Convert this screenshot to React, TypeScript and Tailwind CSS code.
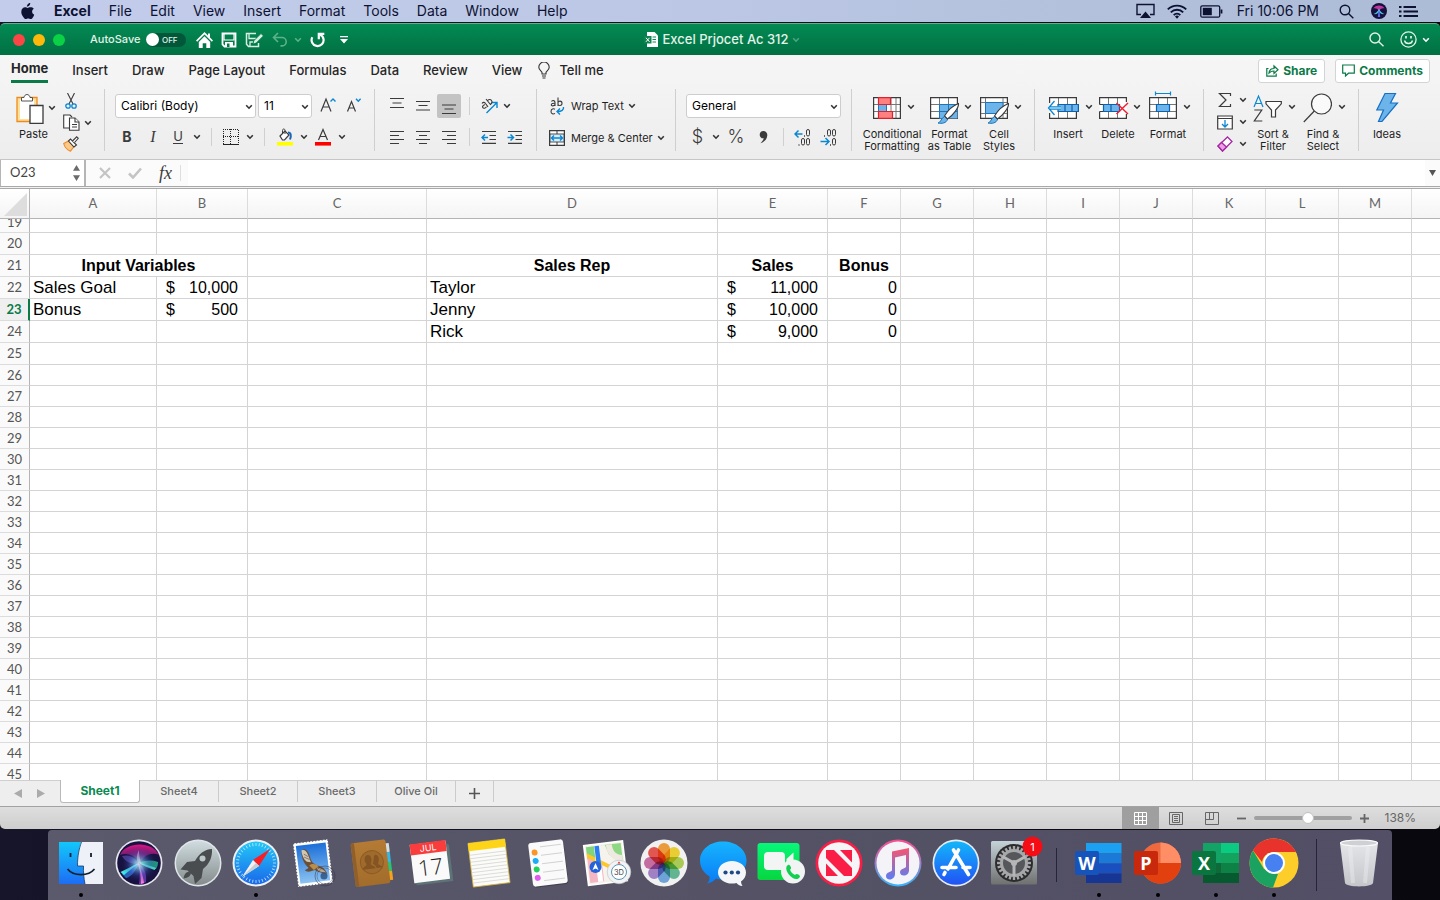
import React from "react";

const INK = "#3b3b3b";
const BLUE = "#0a87d1";

function Chevron({ color = "#333333", className = "" }: { color?: string; className?: string }) {
  return (
    <svg width="8" height="6" viewBox="0 0 8 6" className={"shrink-0 " + className} fill="none" stroke={color} strokeWidth="1.6">
      <path d="M1.2 1.2 4 4.2 6.800 1.2" />
    </svg>
  );
}

function ChevronButton({ label, className = "w-3" }: { label: string; className?: string }) {
  return (
    <button aria-label={label} className={"flex h-6 shrink-0 items-center justify-center " + className}>
      <Chevron />
    </button>
  );
}

function IconButton({ label, className = "h-6 w-[26px]", children }: { label: string; className?: string; children: React.ReactNode }) {
  return (
    <button aria-label={label} className={"flex shrink-0 items-center justify-center " + className}>
      {children}
    </button>
  );
}

function Separator({ className = "w-4" }: { className?: string }) {
  return (
    <div className={"flex h-6 shrink-0 items-center justify-center " + className}>
      <div className="h-[18px] w-px bg-[#d0d0d0]" />
    </div>
  );
}

function Select({ label, value, className }: { label: string; value: string; className: string }) {
  return (
    <div className={"relative shrink-0 " + className}>
      <select aria-label={label} className="h-6 w-full appearance-none rounded-[3px] border border-[#cdcdcd] bg-white pl-[5px] text-xs text-black">
        <option>{value}</option>
      </select>
      <Chevron className="pointer-events-none absolute top-[10px] right-[3px]" />
    </div>
  );
}

/* ---------- menu bar ---------- */

const MENUS = ["File", "Edit", "View", "Insert", "Format", "Tools", "Data", "Window", "Help"];

function MenuBar() {
  return (
    <header className="flex h-[22px] shrink-0 items-center bg-linear-to-r from-[#c3cdeb] via-[#bbc7e4] to-[#acbbd6] pr-[22px] pl-5 text-sm text-[#0d1233]">
      <svg width="15" height="17" viewBox="0 0 15 17" fill="#0d1233" className="mr-[19px] shrink-0">
        <path d="M10.2 0c.1 1-.3 1.900-.9 2.600-.6.700-1.500 1.200-2.400 1.200-.1-1 .3-1.900.9-2.600C8.400.500 9.400 0 10.200 0zM13.800 5.700c-1 .6-1.700 1.600-1.700 2.900 0 1.500.8 2.600 2.100 3.100-.3 1-.8 1.900-1.400 2.700-.6.900-1.200 1.700-2.200 1.700-.9 0-1.300-.6-2.400-.6-1.100 0-1.500.6-2.400.6-1 0-1.700-.9-2.300-1.800C2.200 12.600 1.300 10.800 1.300 8.900c0-3 1.900-4.600 3.800-4.600 1 0 1.900.7 2.500.7.600 0 1.600-.7 2.800-.7 1.300 0 2.600.5 3.400 1.400z" />
      </svg>
      <nav className="flex items-center gap-[18px] whitespace-nowrap">
        <button className="font-bold">Excel</button>
        {MENUS.map((m) => (
          <button key={m}>{m}</button>
        ))}
      </nav>
      <div className="ml-auto flex items-center">
        <svg width="19" height="16" viewBox="0 0 19 16" className="mr-3" fill="none" stroke="#0d1233" strokeWidth="1.400">
          <path d="M5 11.500H1V1.500h17v10h-4" />
          <path d="M9.500 8.500 15 15H4z" fill="#0d1233" stroke="none" />
        </svg>
        <svg width="20" height="15" viewBox="0 0 20 15" className="mr-[13px]" fill="none" stroke="#0d1233" strokeWidth="1.900">
          <path d="M.8 5.400a13 13 0 0 1 18.400 0M3.800 8.300a8.800 8.800 0 0 1 12.400 0M6.700 11.100a4.700 4.700 0 0 1 6.600 0" />
          <path d="m10 14.800-2-2.200a2.800 2.800 0 0 1 4 0z" fill="#0d1233" stroke="none" />
        </svg>
        <svg width="23" height="13" viewBox="0 0 23 13" className="mr-[14px]" fill="none" stroke="#0d1233" strokeWidth="1.300">
          <rect x=".8" y=".8" width="18.900" height="11.400" rx="1.500" />
          <rect x="2.800" y="2.800" width="9" height="7.400" fill="#0d1233" stroke="none" />
          <path d="M21.500 4.500v4" strokeWidth="1.800" />
        </svg>
        <span className="mr-5 whitespace-nowrap">Fri 10:06 PM</span>
        <svg width="15" height="15" viewBox="0 0 15 15" className="mr-[17px]" fill="none" stroke="#0d1233" strokeWidth="1.400">
          <circle cx="6" cy="6" r="4.800" />
          <path d="m9.500 9.500 4.800 4.800" />
        </svg>
        <svg width="16" height="16" viewBox="0 0 16 16" className="mr-3">
          <circle cx="8" cy="8" r="8" fill="#16103c" />
          <path d="M2.500 5.500C4 1.500 12 1.500 13.500 5.500 11 5 9 6 8 8 7 6 5 5 2.500 5.500z" fill="#c2359a" />
          <path d="M8 5.500c1 3 3 4.500 5.500 5.500-2.500.5-4.500-.5-5.500-2-1 1.500-3 2.500-5.500 2C5 10 7 8.500 8 5.500z" fill="#48c6ee" />
          <path d="M7.500 8h1l.7 6H6.800z" fill="#5d6bea" />
        </svg>
        <svg width="19" height="13" viewBox="0 0 19 13" fill="none" stroke="#0d1233" strokeWidth="2">
          <path d="M0 2h2.500M4.500 2H17M0 6.500h2.500M4.500 6.500H19M0 11h2.500M4.500 11H19" />
        </svg>
      </div>
    </header>
  );
}

/* ---------- title bar ---------- */

function TitleBar() {
  return (
    <div className="grid h-8 shrink-0 grid-cols-[1fr_auto_1fr] items-center rounded-t-[5px] border-t border-[#5fb08c] bg-linear-to-b from-[#038a53] to-[#017042] text-[#e3f3ea]">
      <div className="flex items-center pl-[13px]">
        <div className="flex gap-2">
          <button aria-label="Close" className="size-3 rounded-full bg-[#fc4646]" />
          <button aria-label="Minimize" className="size-3 rounded-full bg-[#fdb80b]" />
          <button aria-label="Zoom" className="size-3 rounded-full bg-[#0ad146]" />
        </div>
        <span className="ml-[25px] w-[56px] text-[11px] font-medium whitespace-nowrap">AutoSave</span>
        <button role="switch" aria-checked="false" aria-label="AutoSave" className="flex h-[14px] w-10 items-center rounded-full bg-[#02573a] text-[8px] font-medium">
          <span className="mr-[3px] size-[13px] rounded-full bg-white" />
          OFF
        </button>
        <button aria-label="Home" className="ml-[10px]">
          <svg width="17" height="16" viewBox="0 0 17 16" fill="#ffffff">
            <path d="M8.500 0 12 3.500V1.500h2v4l3 3-1.200 1.200L8.500 2.500 1.200 9.700 0 8.500z" />
            <path d="m8.500 4.300 5.700 5.600V16H10.300v-4.800H6.700V16H2.800V9.900z" />
          </svg>
        </button>
        <button aria-label="Save" className="ml-2">
          <svg width="16" height="16" viewBox="0 0 16 16" fill="none" stroke="#ffffff" strokeWidth="1.800">
            <path d="M1.500 1.500h13v13h-11l-2-2z" />
            <path d="M3 1.500V8h10V1.500" strokeWidth="1.200" />
            <path d="M4 10h8v5H4z" fill="#fff" stroke="none" />
            <path d="M6 11.500h2.500V15H6z" fill="#017a49" stroke="none" />
          </svg>
        </button>
        <button aria-label="Save As" className="ml-2">
          <svg width="19" height="16" viewBox="0 0 19 16" fill="none" stroke="#d6efe2" strokeWidth="1.500">
            <path d="M11 1.500H1.500v10.700l2 2.300h10V11" />
            <path d="M4 2v4.500h7M5 14v-4h3" strokeWidth="1.300" />
            <path d="m8 12 .8-3.300 7.200-7.200 2.400 2.400-7.200 7.200z" fill="#d6efe2" stroke="#017a49" strokeWidth=".8" />
          </svg>
        </button>
        <button aria-label="Undo" className="ml-2 flex items-center gap-[6px]">
          <svg width="16" height="15" viewBox="0 0 16 15" fill="none" stroke="#5cb38b" strokeWidth="1.600">
            <path d="M6 1 1.500 5.500 6 10M1.500 5.500H10a4.200 4.200 0 0 1 0 8.400H8.500" />
          </svg>
          <Chevron color="#5cb38b" />
        </button>
        <button aria-label="Redo" className="ml-2">
          <svg width="16" height="16" viewBox="0 0 16 16" fill="none" stroke="#ffffff" strokeWidth="2.200">
            <path d="M2.300 5.200A6 6 0 1 0 13.500 7c-.3-1.800-1.500-3.500-3.300-4.300" />
            <path d="M8.800 7.200V1.800h5.500" />
          </svg>
        </button>
        <button aria-label="Customize toolbar" className="ml-[14px]">
          <svg width="8" height="8" viewBox="0 0 8 8" fill="#ffffff">
            <path d="M0 0h8v1.300H0zM0 3h8L4 7.500z" />
          </svg>
        </button>
      </div>
      <div className="flex items-center text-[13px] font-medium whitespace-nowrap">
        <svg width="14" height="15" viewBox="0 0 14 15" className="mr-1 ml-1">
          <path d="M3 0h7.500L14 3.500V15H3z" fill="#fff" />
          <path d="M8.500 5H12M8.500 7.500H12M8.500 10H12" stroke="#0b8a53" />
          <path d="M0 4h7.500v7.500H0z" fill="#0d8350" />
          <path d="m2 5.800 3.500 4M5.500 5.800 2 9.800" stroke="#fff" />
        </svg>
        Excel Prjocet Ac 312
        <Chevron color="#4da680" className="ml-[3px]" />
      </div>
      <div className="flex items-center justify-end pr-[10px]">
        <button aria-label="Search" className="mr-4">
          <svg width="15" height="15" viewBox="0 0 15 15" fill="none" stroke="#e3f3ea" strokeWidth="1.400">
            <circle cx="6" cy="6" r="5" />
            <path d="m9.500 9.500 5 4.800" />
          </svg>
        </button>
        <button aria-label="Feedback" className="flex items-center gap-[5px]">
          <svg width="17" height="17" viewBox="0 0 17 17" fill="none" stroke="#e3f3ea" strokeWidth="1.300">
            <circle cx="8.500" cy="8.500" r="7.600" />
            <path d="M4.500 9.500c.8 4 7.200 4 8 0" />
            <path d="M6 5v2.500M11 5v2.500" strokeWidth="1.700" />
          </svg>
          <Chevron color="#ffffff" />
        </button>
      </div>
    </div>
  );
}

/* ---------- ribbon ---------- */

const RIBBON_TABS = ["Insert", "Draw", "Page Layout", "Formulas", "Data", "Review", "View"];

function RibbonTabs() {
  return (
    <div className="flex h-[30px] shrink-0 items-center justify-between pr-[10px] pl-[11px] text-xs font-medium text-[#262626]">
      <nav className="flex h-full items-start gap-6 text-[13px] whitespace-nowrap">
        <button className="h-7 border-b-3 border-[#0a7a48] pt-[3px] font-bold">Home</button>
        {RIBBON_TABS.map((t) => (
          <button key={t} className="h-[31px]">{t}</button>
        ))}
        <button className="-ml-2 flex h-[31px] items-center gap-[9px]">
          <svg width="12" height="17" viewBox="0 0 12 17" fill="none" stroke="#333" strokeWidth="1.100">
            <path d="M4 12V10.500C3.500 9 .8 8 .8 5.200a5.200 5.200 0 0 1 10.400 0C11.200 8 8.500 9 8 10.500V12zM4 14h4M4.500 16h3" />
          </svg>
          Tell me
        </button>
      </nav>
      <div className="flex gap-[10px] pt-px font-bold text-[#0b7a47]">
        <button className="flex h-6 items-center gap-1 rounded-[3px] border border-[#d4d4d4] bg-white px-[7px]">
          <svg width="13" height="13" viewBox="0 0 13 13" fill="none" stroke="#0b7a47" strokeWidth="1.200">
            <path d="M2.500 4.500H.8v7.700h9.400V9.500" />
            <path d="M3 9c.3-3 2-4.500 5-4.500V2l4 3.800-4 3.700V7C6 7 4.500 7.500 3 9z" />
          </svg>
          Share
        </button>
        <button className="flex h-6 items-center gap-1 rounded-[3px] border border-[#d4d4d4] bg-white px-[6px]">
          <svg width="13" height="13" viewBox="0 0 13 13" fill="none" stroke="#0b7a47" strokeWidth="1.200">
            <path d="M.7 1h11.600v8.200H6.500L3.500 12V9.200H.7z" />
          </svg>
          Comments
        </button>
      </div>
    </div>
  );
}

function Lines({ d }: { d: string }) {
  return (
    <svg width="16" height="18" viewBox="0 0 16 18" fill="none" stroke={INK} strokeWidth="1.200">
      <path d={d} />
    </svg>
  );
}

function BigButton({ label, lines, className, children }: { label: string; lines: string[]; className: string; children: React.ReactNode }) {
  return (
    <button aria-label={label} className={"flex shrink-0 flex-col items-center " + className}>
      <span className="flex h-[38px] items-center gap-[6px] pb-1 pl-[3px]">
        {children}
        <Chevron />
      </span>
      {lines.map((l) => (
        <span key={l} className="text-[11px] leading-3 whitespace-nowrap">{l}</span>
      ))}
    </button>
  );
}

function Grid28({ children }: { children?: React.ReactNode }) {
  return (
    <svg width="28" height="34" viewBox="0 0 28 34" fill="none" className="overflow-visible">
      <path d="M.6 7.600h26.800v20.800H.6z" fill="#fff" />
      <path d="M9.500 8v20M18.500 8v20M1 14.500h26M1 21.500h26" stroke="#777" />
      <path d="M.6 7.600h26.800v20.800H.6z" stroke="#3b3b3b" strokeWidth="1.200" />
      {children}
    </svg>
  );
}

function Brush() {
  return (
    <g>
      <path d="M8 33c3-.5 3-5 6.500-6.500l3 3C16.500 33 11.500 34 8 33z" fill="#6cb4ea" stroke="#1d74b8" />
      <path d="M14.500 26c3-5 8.500-10.500 14-12.500.5 4-5.500 12-11 15.500z" fill="#fff" stroke="#3b3b3b" strokeWidth="1.100" />
    </g>
  );
}

function Group({ className, children }: { className: string; children: React.ReactNode }) {
  return (
    <div className={"flex h-[62px] shrink-0 border-r border-[#cfcfcf] " + className}>{children}</div>
  );
}

function Ribbon() {
  return (
    <div className="flex h-[74px] shrink-0 overflow-hidden pt-1 text-[11px] text-[#1e1e1e]">
      <Group className="w-[105px] pl-3">
        <button className="flex w-[43px] flex-col items-center">
          <span className="flex h-[38px] items-start gap-1 pt-1 pl-1">
            <svg width="28" height="32" viewBox="0 0 28 32" fill="none">
              <path d="M1 4.500h20v24H1z" fill="#fbe29a" stroke="#f08a1d" strokeWidth="1.300" />
              <path d="M4 7h14v19H4z" fill="#fff" />
              <path d="M5.500 8V4.500H8c.5-4 5.500-4 6 0h2.500V8z" fill="#fff" stroke="#555" />
              <path d="M14 12.500h13v17.900H14z" fill="#fff" stroke="#3b3b3b" strokeWidth="1.300" />
            </svg>
            <Chevron className="mt-3" />
          </span>
          <span className="mt-px leading-3">Paste</span>
        </button>
        <div className="flex w-9 flex-col items-start pl-2">
          <IconButton label="Cut" className="h-6 w-4">
            <svg width="12" height="16" viewBox="0 0 12 16" fill="none" strokeWidth="1.100">
              <path d="M2.500 0 8 11M9.500 0 4 11" stroke="#3b3b3b" />
              <circle cx="3" cy="13" r="2.200" stroke={BLUE} strokeWidth="1.300" />
              <circle cx="9" cy="13" r="2.200" stroke={BLUE} strokeWidth="1.300" />
            </svg>
          </IconButton>
          <button aria-label="Copy" className="flex h-[19px] shrink-0 items-center gap-1">
            <svg width="17" height="17" viewBox="0 0 17 17" fill="#fff" stroke="#3b3b3b" strokeWidth="1.100">
              <path d="M7 14H.7V1H7l2 2" />
              <path d="M6.500 4H12l4 4v8.300H6.500z" />
              <path d="M12 4v4h4M9 10.500h5M9 13h5" />
            </svg>
            <Chevron />
          </button>
          <IconButton label="Format Painter" className="h-6 w-4">
            <svg width="16" height="16" viewBox="0 0 16 16" strokeWidth="1.100">
              <path d="M.7 7.500 5.500 5 11 10.500 7.500 15.200C4.500 14 1.500 11 .7 7.500z" fill="#fbc98b" stroke="#f08a1d" />
              <path d="m5.500 5 2-2 6 6-2.500 2z" fill="#fff" stroke="#3b3b3b" />
              <path d="m9.500 5 4.200-4.200L15.300 2.300 11.500 6.500" fill="#fff" stroke="#3b3b3b" />
            </svg>
          </IconButton>
        </div>
      </Group>

      <Group className="w-[270px] flex-col gap-[7px] pt-[5px] pl-[9px]">
        <div className="flex items-center gap-[2px] pl-px">
          <Select label="Font" value="Calibri (Body)" className="w-[141px]" />
          <Select label="Font size" value="11" className="w-[54px]" />
          <IconButton label="Increase font size" className="ml-[2px] h-6 w-6">
            <svg width="17" height="18" viewBox="0 0 17 18" fill="none" stroke={INK} strokeWidth="1.200">
              <path d="M1 14.500 6 2l5 12.500M2.800 10h6.400" />
              <path d="m10.500 4.500 2.500-2.500 2.500 2.500" stroke={BLUE} strokeWidth="1.400" />
            </svg>
          </IconButton>
          <IconButton label="Decrease font size" className="h-6 w-6">
            <svg width="16" height="18" viewBox="0 0 16 18" fill="none" stroke={INK} strokeWidth="1.200">
              <path d="M1.500 14.500 5.500 4.500l4 10M3 11h5" />
              <path d="m10 1.800 2.300 2.400L14.600 1.800" stroke={BLUE} strokeWidth="1.400" />
            </svg>
          </IconButton>
        </div>
        <div className="flex items-center">
          <IconButton label="Bold"><span className="text-sm font-bold text-[#3b3b3b]">B</span></IconButton>
          <IconButton label="Italic"><span className="font-['Liberation_Serif',serif] text-base text-[#3b3b3b] italic">I</span></IconButton>
          <IconButton label="Underline" className="h-6 w-6"><span className="border-b border-[#3b3b3b] text-[13px] leading-[13px] text-[#3b3b3b]">U</span></IconButton>
          <ChevronButton label="Underline options" className="w-[14px]" />
          <Separator className="w-[14px]" />
          <IconButton label="Borders">
            <svg width="16" height="16" viewBox="0 0 16 16" fill="none" stroke="#222" strokeWidth="1" shapeRendering="crispEdges">
              <path d="M0 .5h16M0 7.500h16M.5 0v15M15.500 1v14M7.500 0v15" strokeDasharray="1 1" />
              <path d="M0 15.500h16" />
            </svg>
          </IconButton>
          <ChevronButton label="Border options" />
          <Separator />
          <IconButton label="Fill color">
            <svg width="16" height="18" viewBox="0 0 16 18" fill="none">
              <path d="m3 8 5-5 4 4-4.500 5H5.500z" fill="#fff" stroke="#3b3b3b" strokeWidth="1.200" />
              <path d="M5.500 5.500V2.500c0-2 2.500-2 2.500 0V6" stroke="#3b3b3b" />
              <path d="M11 4.500c3 0 3.500 3 2 7" stroke="#1d66b5" strokeWidth="2" />
              <path d="M0 14h16v3.600H0z" fill="#ffff00" />
            </svg>
          </IconButton>
          <ChevronButton label="Fill color options" />
          <IconButton label="Font color">
            <svg width="16" height="18" viewBox="0 0 16 18" fill="none">
              <path d="M3.500 12 8 1.500 12.500 12M5 8.500h6" stroke={INK} strokeWidth="1.200" />
              <path d="M0 14h16v3.600H0z" fill="#ff0000" />
            </svg>
          </IconButton>
          <ChevronButton label="Font color options" />
        </div>
      </Group>

      <Group className="w-[162px] flex-col gap-[7px] pt-[5px] pl-[9px]">
        <div className="flex items-center">
          <IconButton label="Top align"><Lines d="M1 1.500h14M3.500 6h9M1 10.500h14" /></IconButton>
          <IconButton label="Middle align"><Lines d="M1 4.500h14M3.500 8.500h9M1 13h14" /></IconButton>
          <IconButton label="Bottom align" className="mx-px h-6 w-6 rounded-[2px] bg-[#c3c3c3]"><Lines d="M1 8h14M3.500 12h9M1 16.500h14" /></IconButton>
          <Separator className="w-[14px]" />
          <IconButton label="Orientation">
            <svg width="17" height="16" viewBox="0 0 17 16" fill="none" strokeWidth="1.100">
              <path d="M5.500 15 15.500 5M10.500 4.500h5.500V10" stroke={BLUE} strokeWidth="1.400" />
              <path d="M1 5.500C2 4 3.500 4 4.500 5.500L7 8.800M3.800 6.500c-2 1.200-2.800 2.200-2 3.200s2.800.6 3.700-1M5 1l4.800 6M6.500 3c.8-1.700 3-2 4-.5s.5 3-1.500 4" stroke={INK} />
            </svg>
          </IconButton>
          <ChevronButton label="Orientation options" className="w-[10px]" />
        </div>
        <div className="flex items-center">
          <IconButton label="Align left"><Lines d="M1 3.500h14M1 7.500h9M1 11.500h14M1 15.500h9" /></IconButton>
          <IconButton label="Align center"><Lines d="M1 3.500h14M4 7.500h8M1 11.500h14M4 15.500h8" /></IconButton>
          <IconButton label="Align right"><Lines d="M1 3.500h14M6 7.500h9M1 11.500h14M6 15.500h9" /></IconButton>
          <Separator className="w-[14px]" />
          <IconButton label="Decrease indent">
            <svg width="16" height="14" viewBox="0 0 16 14" fill="none" stroke={INK} strokeWidth="1.200">
              <path d="M1 1.500h14M8.500 5.500H15M8.500 9.500H15M1 13.400h14" />
              <path d="M7 7.500H1.500M4 4.500l-3 3 3 3" stroke={BLUE} strokeWidth="1.500" />
            </svg>
          </IconButton>
          <IconButton label="Increase indent">
            <svg width="16" height="14" viewBox="0 0 16 14" fill="none" stroke={INK} strokeWidth="1.200">
              <path d="M1 1.500h14M8.500 5.500H15M8.500 9.500H15M1 13.400h14" />
              <path d="M.5 7.500H6M3.500 4.500l3 3-3 3" stroke={BLUE} strokeWidth="1.500" />
            </svg>
          </IconButton>
        </div>
      </Group>

      <Group className="w-[139px] flex-col gap-2 pt-[5px] pl-3">
        <button className="flex h-6 items-center whitespace-nowrap">
          <svg width="16" height="18" viewBox="0 0 16 18" fill="none" stroke={INK} strokeWidth="1.100" className="mr-[6px]">
            <path d="M2.500 4.500C3.500 3 6 3.300 6 5.500V9M6 6.300C4 6.200 2.300 6.600 2.300 7.900S5 9.300 6 7.500M9 .5V9M9 6c0-2.500 4-2.700 4 .3S9 9 9 7M6 12.200c-1.500-1-4-.5-4 2.200s2.500 3 4 2" />
            <path d="M14.500 10c.5 3-2 4.500-6 4.500M11 11.500l-3 3 3 3" stroke={BLUE} strokeWidth="1.400" />
          </svg>
          Wrap Text
          <Chevron className="ml-1" />
        </button>
        <button className="flex h-6 items-center whitespace-nowrap">
          <svg width="16" height="16" viewBox="0 0 16 16" fill="none" className="mr-[6px]">
            <path d="M.6.600h14.800v14.800H.6z" fill="#fff" stroke={INK} strokeWidth="1.200" />
            <path d="M8 1v14" stroke={INK} />
            <path d="M1 4h14v8H1z" fill="#d5ecfa" stroke={INK} strokeWidth=".9" />
            <path d="M2.500 8h11M5 5.500 2.500 8 5 10.500M11 5.500 13.500 8 11 10.500" stroke={BLUE} strokeWidth="1.400" />
          </svg>
          Merge &amp; Center
          <Chevron className="ml-1" />
        </button>
      </Group>

      <Group className="w-[176px] flex-col gap-[7px] pt-[5px] pl-[10px]">
        <Select label="Number format" value="General" className="w-[155px]" />
        <div className="flex items-center text-[#3b3b3b]">
          <IconButton label="Accounting format" className="h-6 w-[23px]"><span className="text-lg leading-5 font-light">$</span></IconButton>
          <ChevronButton label="Accounting options" className="w-[14px]" />
          <IconButton label="Percent"><span className="text-lg leading-5 font-light">%</span></IconButton>
          <IconButton label="Comma" className="h-6 w-7">
            <svg width="9" height="14" viewBox="0 0 9 14" fill={INK}><path d="M4.300 1C7 1 8.500 3 8.300 5.500 8 9 5.500 12 1.500 13.300c2-2 3-3.500 3.300-5C2.500 8.700.7 7 .7 4.700.7 2.500 2.200 1 4.300 1z" /></svg>
          </IconButton>
          <Separator className="w-3" />
          <IconButton label="Increase decimal">
            <svg width="17" height="17" viewBox="0 0 17 17" fill="none" stroke={INK}>
              <path d="M8.500 5H1M4.500 1.500 1 5l3.500 3.500" stroke={BLUE} strokeWidth="1.500" />
              <rect x="12.500" y=".5" width="3" height="6.500" rx="1.500" /><rect x="7.500" y="9.500" width="3" height="6.500" rx="1.500" /><rect x="12.500" y="9.500" width="3" height="6.500" rx="1.500" />
              <path d="M10 7h1M4.500 16h1" strokeWidth="1.300" />
            </svg>
          </IconButton>
          <IconButton label="Decrease decimal">
            <svg width="17" height="17" viewBox="0 0 17 17" fill="none" stroke={INK}>
              <path d="M.5 12.500h8M5.500 9 9 12.500 5.500 16" stroke={BLUE} strokeWidth="1.500" />
              <rect x="7.500" y=".5" width="3" height="6.500" rx="1.500" /><rect x="12.500" y=".5" width="3" height="6.500" rx="1.500" /><rect x="12.500" y="9.500" width="3" height="6.500" rx="1.500" />
              <path d="M4 7h1M10 16h1" strokeWidth="1.300" />
            </svg>
          </IconButton>
        </div>
      </Group>

      <Group className="w-[183px] pt-px pl-[10px]">
        <BigButton label="Conditional Formatting" lines={["Conditional", "Formatting"]} className="w-[60px]">
          <svg width="28" height="34" viewBox="0 0 28 34" fill="none">
            <path d="M.6 7.600h26.800v20.800H.6z" fill="#fff" />
            <path d="M5.500 8v20M18 8v20M23 8v20M1 14.500h26M1 21.500h26" stroke="#777" />
            <path d="M.6 7.600h26.800v20.800H.6z" stroke={INK} strokeWidth="1.200" />
            <path d="M5.500 14.500h8v7h-8z" fill="#6cb4ea" stroke="#1d74b8" />
            <path d="M5.500 7.600h12v6.900h-12zM5.500 21.500h14v6.900h-14z" fill="#ff8080" stroke="#e0202c" strokeWidth="1.200" />
          </svg>
        </BigButton>
        <BigButton label="Format as Table" lines={["Format", "as Table"]} className="w-[55px]">
          <Grid28>
            <path d="M9.500 14.500h18v14h-18z" fill="#6cb4ea" />
            <path d="M9.500 28.500v-14h18M18.500 14.500v14M9.500 21.500h18" stroke="#1d74b8" />
            <Brush />
          </Grid28>
        </BigButton>
        <BigButton label="Cell Styles" lines={["Cell", "Styles"]} className="w-11">
          <svg width="28" height="34" viewBox="0 0 28 34" fill="none" className="overflow-visible">
            <path d="M.6 7.600h26.800v20.800H.6z" fill="#fff" stroke={INK} strokeWidth="1.200" />
            <path d="M5.500 8v20M23 8v20M1 12.500h26M1 23.500h26" stroke="#777" />
            <path d="M5.500 12.500H23v11H5.500z" fill="#6cb4ea" stroke="#1d74b8" />
            <Brush />
          </svg>
        </BigButton>
      </Group>

      <Group className="w-[169px] pt-px pl-2">
        <BigButton label="Insert Cells" lines={["Insert"]} className="w-[50px]">
          <svg width="32" height="34" viewBox="0 0 32 34" fill="none">
            <path d="M2.600 7.600h26.800v20.800H2.600z" fill="#fff" />
            <path d="M11.500 8v20M20.500 8v20" stroke="#777" />
            <path d="M2.600 13V7.600h26.800V14.500M2.600 23v5.400h26.800V22" stroke={INK} strokeWidth="1.200" />
            <path d="M11 14.500h20.400v7H11zM18 14.500v7M25 14.500v7" fill="#6cb4ea" stroke="#0d62ad" strokeWidth="1.200" />
            <path d="M8 11.500 1.500 18 8 24.500V19.500h6v-3H8z" fill="#fff" />
            <path d="M7.500 11 1.500 18l6 7M2.500 16.800H14M2.500 19.200H14" stroke={BLUE} strokeWidth="1.300" />
          </svg>
        </BigButton>
        <BigButton label="Delete Cells" lines={["Delete"]} className="w-[50px]">
          <svg width="28" height="34" viewBox="0 0 28 34" fill="none" className="overflow-visible">
            <path d="M.6 7.600h26.800v20.800H.6z" fill="#fff" />
            <path d="M9.500 8v6M18.500 8v6M9.500 22v6M18.500 22v6" stroke="#777" />
            <path d="M.6 14.500V7.600h26.800V12M.6 14.500h5M.6 21.500h5M.6 21.500v6.900h26.800V24" stroke={INK} strokeWidth="1.200" />
            <path d="M4.500 14.500h16v7h-16zM12 14.500v7" fill="#6cb4ea" stroke="#0d62ad" strokeWidth="1.200" />
            <path d="m17.500 13 11.500 11M29 13 17.500 24" stroke="#f0212f" strokeWidth="1.500" />
          </svg>
        </BigButton>
        <BigButton label="Format Cells" lines={["Format"]} className="w-[50px]">
          <Grid28>
            <path d="M7.500 14.500h13v7h-13z" fill="#6cb4ea" stroke="#0d62ad" strokeWidth="1.200" />
            <path d="M6 3.500h16M6.500 1.500v4M21.500 1.500v4" stroke={BLUE} strokeWidth="1.200" />
          </Grid28>
        </BigButton>
      </Group>

      <Group className="w-[155px] pt-px pl-[13px]">
        <div className="-mt-px flex w-[31px] flex-col">
          <button aria-label="AutoSum" className="flex h-[22px] shrink-0 items-center gap-[6px]">
            <svg width="16" height="16" viewBox="0 0 16 16" fill="none" stroke={INK} strokeWidth="1.200">
              <path d="M13.500 4V1.500h-11L9 8l-6.500 6.500h11V12" />
            </svg>
            <Chevron />
          </button>
          <button aria-label="Fill" className="flex h-[22px] shrink-0 items-center gap-[6px]">
            <svg width="16" height="15" viewBox="0 0 16 15" fill="none" stroke={INK} strokeWidth="1.200">
              <path d="M.7 1h14.600v13H.7zM.7 3.500h14.600" fill="#fff" />
              <path d="M8 5v7M5 9l3 3 3-3" stroke={BLUE} strokeWidth="1.300" />
            </svg>
            <Chevron />
          </button>
          <button aria-label="Clear" className="flex h-[22px] shrink-0 items-center gap-[6px]">
            <svg width="16" height="16" viewBox="0 0 16 16" fill="#fff" stroke="#a626a4" strokeWidth="1.300">
              <path d="M10.500 1 15 5.500 5.500 15 1 10z" />
              <path d="m4.500 6.500 5 4.500-4 4L1 10z" fill="#eba0e6" />
            </svg>
            <Chevron />
          </button>
        </div>
        <BigButton label="Sort & Filter" lines={["Sort &", "Filter"]} className="w-[50px]">
          <svg width="29" height="34" viewBox="0 0 29 34" fill="none" strokeWidth="1.200">
            <path d="M1 17 5.500 6 10 17M2.700 13.500h5.600" stroke={BLUE} />
            <path d="M1.300 20h7.500L1.300 31h8" stroke={INK} />
            <path d="M13 11.500h15.300v2.300L22.500 20v7h-4v-7L13 13.800z" fill="#fff" stroke={INK} />
          </svg>
        </BigButton>
        <BigButton label="Find & Select" lines={["Find &", "Select"]} className="w-[50px]">
          <svg width="29" height="34" viewBox="0 0 29 34" fill="none" stroke={INK} strokeWidth="1.200">
            <circle cx="18.500" cy="14" r="10" fill="#fafafa" />
            <path d="M11.300 21 .8 32" />
          </svg>
        </BigButton>
      </Group>

      <button className="ml-[3px] flex w-[50px] shrink-0 flex-col items-center pt-px">
        <svg width="24" height="34" viewBox="0 0 24 34" className="mb-1" fill="#6cb4ea" stroke="#1470c4" strokeWidth="1.200">
          <path d="M10 3.500h10.500L15.500 13H22.500L7 31.500H3.500L8.500 20H1.800z" />
        </svg>
        <span className="leading-3">Ideas</span>
      </button>
    </div>
  );
}

function FormulaBar() {
  return (
    <div className="flex h-7 shrink-0 border-y border-t-[#c6c6c6] border-b-[#a9a9a9] bg-[#fbfbfb]">
      <div className="flex w-[86px] items-center border-r-2 border-l border-[#b5b5b5] bg-white">
        <input aria-label="Name box" defaultValue="O23" className="w-[67px] pl-[9px] font-[Lato,sans-serif] text-[13px] text-[#444]" />
        <svg width="9" height="18" viewBox="0 0 9 18" className="ml-1" fill="#6b6b6b">
          <path d="M4.500 1 8 6.800H1zM4.500 17 8 11.200H1z" />
        </svg>
      </div>
      <div className="flex items-center pl-[13px]">
        <button aria-label="Cancel" className="mr-[17px]">
          <svg width="12" height="12" viewBox="0 0 12 12" stroke="#c4c4c4" strokeWidth="2.200"><path d="m1 1 10 10M11 1 1 11" /></svg>
        </button>
        <button aria-label="Enter" className="mr-[17px]">
          <svg width="14" height="12" viewBox="0 0 14 12" fill="none" stroke="#c4c4c4" strokeWidth="2.600"><path d="m1 6.500 4 4L13 1.500" /></svg>
        </button>
        <button aria-label="Insert function" className="mr-2 font-['Liberation_Serif',serif] text-lg leading-5 text-[#3b3b3b] italic">fx</button>
        <div className="h-4 w-px bg-[#dedede]" />
      </div>
      <input aria-label="Formula" className="ml-[7px] min-w-0 flex-1 bg-white" />
      <button aria-label="Expand formula bar" className="px-1">
        <svg width="7" height="6" viewBox="0 0 7 6" fill="#555"><path d="M0 0h7L3.500 6z" /></svg>
      </button>
    </div>
  );
}

/* ---------- sheet ---------- */

const COLS = ["A", "B", "C", "D", "E", "F", "G", "H", "I", "J", "K", "L", "M", ""];
const ROWS = Array.from({ length: 27 }, (_, i) => i + 19);

type Cell = { text: string; kind: "head" | "text" | "money" | "number"; span?: number };
const CELLS: Record<string, Cell> = {
  A21: { text: "Input Variables", kind: "head", span: 2 },
  D21: { text: "Sales Rep", kind: "head" },
  E21: { text: "Sales", kind: "head" },
  F21: { text: "Bonus", kind: "head" },
  A22: { text: "Sales Goal", kind: "text" },
  B22: { text: "10,000", kind: "money" },
  D22: { text: "Taylor", kind: "text" },
  E22: { text: "11,000", kind: "money" },
  F22: { text: "0", kind: "number" },
  A23: { text: "Bonus", kind: "text" },
  B23: { text: "500", kind: "money" },
  D23: { text: "Jenny", kind: "text" },
  E23: { text: "10,000", kind: "money" },
  F23: { text: "0", kind: "number" },
  D24: { text: "Rick", kind: "text" },
  E24: { text: "9,000", kind: "money" },
  F24: { text: "0", kind: "number" },
};

const CELL_STYLE = {
  head: "text-center font-bold",
  text: "pl-[3px] text-left text-[17px]",
  money: "px-[9px]",
  number: "pr-[3px] text-right",
};

function rowHeight(n: number) {
  if (n === 19) return "h-[14px]";
  return n <= 25 ? "h-[22px] leading-[21px]" : "h-[21px] leading-5";
}

function Sheet() {
  return (
    <main className="min-h-0 flex-1 overflow-hidden border-t border-[#a9a9a9] bg-white">
      <table className="w-full table-fixed border-separate border-spacing-0 whitespace-nowrap">
        <colgroup>
          <col className="w-[30px]" />
          <col className="w-[127px]" />
          <col className="w-[91px]" />
          <col className="w-[179px]" />
          <col className="w-[291px]" />
          <col className="w-[110px]" />
          {COLS.slice(5, 13).map((c) => (
            <col key={c} className="w-[73px]" />
          ))}
          <col />
        </colgroup>
        <thead>
          <tr className="h-[30px] bg-linear-to-b from-white to-[#f4f4f4] font-[Lato,sans-serif] text-[13px] text-[#666]">
            <th className="border-r border-b border-[#b4b4b4] p-0">
              <svg width="29" height="29" viewBox="0 0 29 29" className="block"><path d="M27 4v23H4z" fill="#dddddd" /></svg>
            </th>
            {COLS.map((c) => (
              <th key={c} scope="col" className="border-r border-b border-r-[#dcdcdc] border-b-[#b4b4b4] p-0 font-normal last:border-r-0">{c}</th>
            ))}
          </tr>
        </thead>
        <tbody className="font-['Liberation_Sans',sans-serif] text-base text-black">
          {ROWS.map((n) => (
            <tr key={n} className={rowHeight(n)}>
              <th
                scope="row"
                className={
                  "border-b border-b-[#dcdcdc] p-0 font-[Lato,sans-serif] text-[13px] " +
                  (n === 23
                    ? "border-r-2 border-r-[#0a7a48] bg-[#efefef] font-bold text-[#0a7a48]"
                    : "border-r border-r-[#b4b4b4] bg-[#fafafa] font-normal text-[#555]")
                }
              >
                {n === 19 ? (
                  <span className="flex h-[13px] items-end justify-center overflow-hidden"><span className="leading-5">19</span></span>
                ) : (
                  n
                )}
              </th>
              {COLS.map((c, i) => {
                if (n === 21 && c === "B") return null;
                const cell = CELLS[c + n];
                return (
                  <td key={i} colSpan={cell?.span} className={"border-r border-b border-[#d4d4d4] py-0 last:border-r-0 " + (cell ? CELL_STYLE[cell.kind] : "")}>
                    {cell?.kind === "money" ? (
                      <span className="flex justify-between"><span>$</span><span>{cell.text}</span></span>
                    ) : (
                      cell?.text
                    )}
                  </td>
                );
              })}
            </tr>
          ))}
        </tbody>
      </table>
    </main>
  );
}

function SheetTabs() {
  return (
    <div className="flex h-[26px] shrink-0 items-start border-t border-[#cfcfcf] bg-[#eeeeee] text-[11px] font-medium text-[#6a6a6a]">
      <div className="flex w-[60px] items-center gap-[15px] pt-2 pl-[14px]">
        <button aria-label="Previous sheet"><svg width="8" height="9" viewBox="0 0 8 9" className="block" fill="#ababab"><path d="M8 0v9L0 4.500z" /></svg></button>
        <button aria-label="Next sheet"><svg width="8" height="9" viewBox="0 0 8 9" className="block" fill="#ababab"><path d="M0 0v9l8-4.500z" /></svg></button>
      </div>
      <button className="-mt-px h-[23px] w-20 rounded-b-[3px] border border-t-0 border-[#b9b9b9] bg-white text-xs font-bold text-[#0b8a50]">Sheet1</button>
      {["Sheet4", "Sheet2", "Sheet3", "Olive Oil"].map((s) => (
        <button key={s} className="h-[21px] w-[79px] border-r border-[#cbcbcb]">{s}</button>
      ))}
      <button aria-label="Add sheet" className="flex h-[21px] w-[38px] items-center justify-center border-r border-[#cbcbcb] pt-1">
        <svg width="11" height="11" viewBox="0 0 11 11" stroke="#555" strokeWidth="1.600"><path d="M5.500 0v11M0 5.500h11" /></svg>
      </button>
    </div>
  );
}

function StatusBar() {
  return (
    <div className="flex h-[23px] shrink-0 items-center justify-end rounded-b-[5px] border-t border-[#a2a2a2] bg-linear-to-b from-[#dedede] to-[#cecece] text-[#666]">
      <button aria-label="Normal view" className="flex h-full w-[37px] items-center justify-center bg-[#9f9f9f]">
        <svg width="13" height="13" viewBox="0 0 13 13" fill="none" stroke="#fff"><path d="M.5.500h12v12H.5zM4.500.500v12M8.500.500v12M.5 4.500h12M.5 8.500h12" /></svg>
      </button>
      <button aria-label="Page layout view" className="ml-[10px]">
        <svg width="14" height="13" viewBox="0 0 14 13" fill="none" stroke="#666"><path d="M.5.500h13v12H.5zM3.500 2.500h7v8h-7zM5 4.500h4M5 6.500h4M5 8.500h4" /></svg>
      </button>
      <button aria-label="Page break view" className="mx-[22px]">
        <svg width="14" height="13" viewBox="0 0 14 13" fill="none" stroke="#666"><path d="M.5.500h13v12H.5zM.5 7.500h8v-7M4.500.500v7" /></svg>
      </button>
      <button aria-label="Zoom out" className="-ml-1">
        <svg width="9" height="9" viewBox="0 0 9 9" stroke="#666" strokeWidth="1.800"><path d="M0 4.500h9" /></svg>
      </button>
      <input
        type="range"
        aria-label="Zoom level"
        min={0}
        max={100}
        defaultValue={56}
        className="mx-2 h-1 w-[98px] appearance-none rounded-full bg-[#a0a0a0] [&::-webkit-slider-thumb]:size-3 [&::-webkit-slider-thumb]:appearance-none [&::-webkit-slider-thumb]:rounded-full [&::-webkit-slider-thumb]:border [&::-webkit-slider-thumb]:border-[#c0c0c0] [&::-webkit-slider-thumb]:bg-white"
      />
      <button aria-label="Zoom in">
        <svg width="9" height="9" viewBox="0 0 9 9" stroke="#666" strokeWidth="1.800"><path d="M0 4.500h9M4.500 0v9" /></svg>
      </button>
      <span className="mr-6 ml-4 text-xs">138%</span>
    </div>
  );
}

/* ---------- dock ---------- */

function Defs() {
  const stops: [string, string, string][] = [
    ["finder", "#12c7fb", "#1d6df5"],
    ["silver", "#cfdcdf", "#858b8c"],
    ["safari", "#23c8f7", "#1a67ea"],
    ["sky", "#1c6fd8", "#8cc3f2"],
    ["msg", "#16b4ff", "#0a7cf5"],
    ["green", "#06f77a", "#07d640"],
    ["store", "#12b6fb", "#2252f4"],
    ["note", "#f9556f", "#5a7df5"],
    ["ring", "#fb4b8b", "#35b5fb"],
    ["pref", "#c5d3d8", "#6f706f"],
    ["trash", "#e6e7ea", "#c5c6ca"],
    ["book", "#b57b35", "#a26c2b"],
  ];
  return (
    <svg width="0" height="0" className="absolute">
      <defs>
        {stops.map(([id, a, b]) => (
          <linearGradient key={id} id={id} x1="0" y1="0" x2="0" y2="1">
            <stop offset="0" stopColor={a} />
            <stop offset="1" stopColor={b} />
          </linearGradient>
        ))}
        <radialGradient id="siriGlow" cx=".5" cy=".52" r=".5">
          <stop offset="0" stopColor="#ffffff" />
          <stop offset=".22" stopColor="#8fd9f5" stopOpacity=".9" />
          <stop offset=".6" stopColor="#3b4fb8" stopOpacity=".45" />
          <stop offset="1" stopColor="#140f35" stopOpacity="0" />
        </radialGradient>
        <linearGradient id="siriTop" x1="0" y1="0" x2="0" y2="1">
          <stop offset="0" stopColor="#e01283" />
          <stop offset="1" stopColor="#a3309d" stopOpacity=".3" />
        </linearGradient>
      </defs>
    </svg>
  );
}

function OfficeTile({ letter, color }: { letter: string; color: string }) {
  return (
    <g>
      <rect x="1" y="13" width="24" height="24" rx="2" fill={color} />
      <text x="13" y="31.500" textAnchor="middle" fontSize="18" fontWeight="700" fill="#fff" fontFamily="Open Sans, sans-serif">{letter}</text>
    </g>
  );
}

const PETALS = ["#f7941d", "#f5d313", "#a6cf3b", "#4fb58a", "#5b9fe0", "#9a74c8", "#c85a9c", "#ee3e36"];
const TEETH = Array.from({ length: 24 }, (_, i) => i * 15);
const TICKS = Array.from({ length: 36 }, (_, i) => i * 10);

const APPS: { name: string; running?: boolean; art: React.ReactNode }[] = [
  {
    name: "Finder",
    running: true,
    art: (
      <g>
        <path d="M3 4h44v42H3z" fill="#eef2f8" />
        <path d="M3 4h22c-2 7-3.500 14-3.500 24h6c-.2 6 .3 12 1.500 18H3z" fill="url(#finder)" />
        <path d="M25.500 4c-2.500 7-4 14-4 24h6c-.2 6 .3 12 1.500 18" fill="none" stroke="#173a66" strokeWidth=".8" />
        <path d="M14.500 15v4M35 15v4" stroke="#12202e" strokeWidth="1.800" />
        <path d="M11.500 31c6 7.500 21 7.500 27 0" fill="none" stroke="#12202e" strokeWidth="1.700" />
      </g>
    ),
  },
  {
    name: "Siri",
    art: (
      <g>
        <circle cx="25" cy="25" r="23.500" fill="#e6e6ee" />
        <circle cx="25" cy="25" r="21.800" fill="#17123f" />
        <path d="M6 17C11 4 38 2 45 17c-7-3-15 0-19 8-4-6-11-11-20-8z" fill="url(#siriTop)" />
        <path d="M8 18c8-2 14 2 17 8-8 0-14-2-17-8z" fill="#6f58c8" opacity=".6" />
        <path d="M8 36c5-5 10-9 17-11-3 8-8 14-13 15z" fill="#2b77dc" opacity=".85" />
        <path d="M6.500 34 25 25 10 37z" fill="#42f5ec" />
        <path d="M25 25c7-3 13-3 19-1 0 3-1 5-2 7-6-1-11-3-17-6z" fill="#23b893" opacity=".85" />
        <path d="M25 25c6 1 12 3 17 5l-1.500 2C35 30 30 28 25 25z" fill="#4ef0cf" />
        <path d="M24 25c6 4 9 10 8 19-3 2-5 2-7 2 1-7 1-14-1-21z" fill="#7d40c4" opacity=".8" />
        <path d="M24 25c3 6 5 13 6 20l-3 1c0-8-1-14-3-21z" fill="#f47ad9" />
        <circle cx="25" cy="25.500" r="19" fill="url(#siriGlow)" opacity=".75" />
        <path d="M25 12c0 6 1 9 2 13h-3c-2-5-1-9 1-13z" fill="#fff" opacity=".35" />
      </g>
    ),
  },
  {
    name: "Launchpad",
    art: (
      <g>
        <circle cx="25" cy="25" r="23.500" fill="#dfe6e8" />
        <circle cx="25" cy="25" r="22" fill="url(#silver)" />
        <path d="M39 11c.5 8-2.500 15-9 20l-1.500 9-6.500 6-1.500-8-6-5.500-7-1 6.500-7.500 8-1c4-7 9-11.500 17-12z" fill="#4a4d4f" />
        <circle cx="29.500" cy="20.500" r="3" fill="#bcc7ca" />
        <path d="M16 33.500c-4 1-5 4-5.500 7 3-.5 6-1 7.500-5z" fill="#4a4d4f" />
      </g>
    ),
  },
  {
    name: "Safari",
    running: true,
    art: (
      <g>
        <circle cx="25" cy="25" r="23.500" fill="#eef1f4" />
        <circle cx="25" cy="25" r="21.500" fill="url(#safari)" />
        {TICKS.map((a) => (
          <path key={a} d="M25 5v3" stroke="#c6e8fb" strokeWidth=".8" transform={`rotate(${a} 25 25)`} />
        ))}
        <path d="M39 11 28 28 22 22z" fill="#fb1d24" />
        <path d="M11 39 22 22l6 6z" fill="#f2f2f2" />
        <path d="M11 39 28 28l-3-3z" fill="#c9ccd0" />
      </g>
    ),
  },
  {
    name: "Mail",
    art: (
      <g>
        <g transform="rotate(-7 25 25)">
          <rect x="6.500" y="3" width="35" height="44" fill="#fff" />
          <rect x="6.500" y="3" width="35" height="44" fill="none" stroke="#5a596b" strokeWidth="1.400" strokeDasharray="1.200 2" />
          <path d="M9 6h30v38H9z" fill="url(#sky)" />
          <path d="M14 11c3-2 6 0 7 4 1 4 1 7 3 10l4 3c4 1 7 4 9 9-5-1-9-2-12-5l-5 1c-3 0-4-1-5-2 2-1 3-1 4-2-4-4-6-11-5-18z" fill="#6b4f35" />
          <path d="M14 11c3-1 5 1 6 5l2 8-4-1c-3-3-4-7-4-12z" fill="#cfc6b6" />
          <path d="M16 15l4 3M16 18l5 3" stroke="#7a6a58" strokeWidth=".8" />
          <path d="M20 27c3-2 7-1 9 2l-5 3z" fill="#b98d4a" />
          <path d="M28 30c3 1 6 3 8 6-4-1-7-2-9-4z" fill="#b9a78f" />
        </g>
        <circle cx="36" cy="38" r="10" fill="none" stroke="#34344a" strokeWidth="1" opacity=".5" />
        <circle cx="36" cy="38" r="8" fill="none" stroke="#34344a" strokeWidth=".7" opacity=".5" />
        <circle cx="35" cy="38" r="3.500" fill="#1c3f70" opacity=".7" />
      </g>
    ),
  },
  {
    name: "Contacts",
    art: (
      <g transform="rotate(-7 25 25)">
        <path d="M38 7h5v9h-5z" fill="#d7dde0" />
        <path d="M38 16h5v10h-5z" fill="#36b7e6" />
        <path d="M38 26h5v9h-5z" fill="#24c774" />
        <path d="M38 35h5v9h-5z" fill="#f5a21c" />
        <rect x="5" y="3" width="35" height="44" rx="2" fill="url(#book)" />
        <path d="M5 5c0-1 1-2 2-2h1.500v44H7c-1 0-2-1-2-2z" fill="#91602a" />
        <circle cx="24" cy="24" r="11.500" fill="#9f6a2c" stroke="#8a5c26" />
        <path d="M14 30.500c.8-3.500 4.800-2.700 4.300-5.500-2.300-3-1.300-8.500 2.200-8.500s4.500 5.500 2.200 8.500c-.5 2.800 3.500 2 4.300 5.500z" fill="#845523" />
        <path d="M28 30.500c-.5-3-2-4-3.500-4.500 2-3 1.500-8 3.500-9 3.500 0 4.300 5.500 2 8.500-.5 2.500 3 2 4 5z" fill="#845523" />
      </g>
    ),
  },
  {
    name: "Calendar",
    art: (
      <g transform="rotate(-7 25 25)">
        <path d="m42 7 3 2v36.500H9L6 43z" fill="#5d7378" />
        <path d="M6 4.500h36v38.500H6z" fill="#fafafa" />
        <path d="M6 4h36v11H6z" fill="#f93c3c" />
        <text x="24" y="12.800" textAnchor="middle" fontSize="9" fill="#fff" fontFamily="Inter, sans-serif">JUL</text>
        <text x="24" y="37" textAnchor="middle" fontSize="22" fontWeight="300" fill="#222" fontFamily="Open Sans, sans-serif">17</text>
      </g>
    ),
  },
  {
    name: "Notes",
    art: (
      <g transform="rotate(-7 25 25)">
        <path d="M6.500 3h37v44h-37z" fill="#fbfbf8" stroke="#d8b73a" strokeWidth=".8" />
        <path d="M6.500 3h37v8h-37z" fill="#fdd418" />
        <path d="M7 15h36M7 18.500h36M7 22h36M7 25.500h36M7 29h36M7 32.500h36M7 36h36M7 39.500h36M7 43h36" stroke="#d5d5d5" strokeWidth=".8" />
      </g>
    ),
  },
  {
    name: "Reminders",
    art: (
      <g transform="rotate(-7 25 25)">
        <rect x="8" y="5" width="35" height="43" rx="3" fill="#2b2b33" opacity=".5" />
        <rect x="7.500" y="3" width="35" height="44" rx="3" fill="#fafafa" />
        {["#fd9526", "#1badf8", "#1fd25b", "#e05af0"].map((c, i) => (
          <circle key={c} cx="13" cy={13 + i * 8.500} r="3" fill={c} />
        ))}
        <path d="M19 8h21M19 16.500h21M19 25h21M19 33.500h21M19 42h21" stroke="#c9c9c9" strokeWidth=".8" />
      </g>
    ),
  },
  {
    name: "Maps",
    art: (
      <g>
        <g transform="rotate(-7 25 25)">
          <path d="M5 5h39v40H5z" fill="#f6f3ec" />
          <path d="M7 7h12v12H7z" fill="#7fd47c" />
          <path d="M7 14l14 12v17H7z" fill="#f3b6c2" />
          <path d="M7 13 42 36v4L7 18z" fill="#fdc62b" />
          <path d="M21 7h5l3 10 13 12V7z" fill="#8ed884" />
          <path d="M27 7c0 11 6 17 15 18v-6c-6-1-9-5-9-12z" fill="#eeeae1" />
          <path d="M15 7h5v36h-5z" fill="#fff" />
          <path d="M15.500 7H20v20h-4.500z" fill="#2a7cf0" />
          <path d="M30 31h12v12H30z" fill="#dcd6c9" />
          <path d="M5 5h39v40H5z" fill="none" stroke="#fff" strokeWidth="1.600" />
        </g>
        <circle cx="14.500" cy="29" r="6" fill="#2563d8" />
        <path d="m14.500 25 3 7-3-1.500-3 1.500z" fill="#fff" />
        <circle cx="38" cy="34" r="11.800" fill="#f1f3f4" stroke="#b9bec2" strokeWidth=".6" />
        <circle cx="38" cy="34" r="7.500" fill="#fff" stroke="#5d93b0" />
        <text x="38" y="36.800" textAnchor="middle" fontSize="7.500" fill="#444" fontFamily="Inter, sans-serif">3D</text>
        <path d="m38 23.500 1.500 2h-3z" fill="#e22" />
      </g>
    ),
  },
  {
    name: "Photos",
    art: (
      <g>
        <circle cx="25" cy="25" r="23.500" fill="#f1f1f1" />
        {PETALS.map((c, i) => (
          <rect key={c} x="19" y="5" width="12" height="20" rx="6" fill={c} opacity=".85" transform={`rotate(${i * 45} 25 25)`} className="mix-blend-multiply" />
        ))}
      </g>
    ),
  },
  {
    name: "Messages",
    art: (
      <g>
        <path d="M25 3.500c13 0 23.500 8 23.500 19S38 41.500 25 41.500c-2.500 0-5-.3-7-1-2 2.500-5 4.500-9 5 2-2 3-4.500 2.500-7C5.500 35 2 29 2 22.500 2 11.500 12 3.500 25 3.500z" fill="url(#msg)" />
        <path d="M34 23c8 0 14 5 14 11.500 0 4-2 7-5 9 0 1.500.5 3 1.500 4.500-3-.2-5-1.500-6-3-9 2.500-18.500-3-18.500-10.500C20 28 26 23 34 23z" fill="#f4f6f8" />
        <g fill="#1d4a85"><circle cx="27.500" cy="34.500" r="2.100" /><circle cx="33.800" cy="34.500" r="2.100" /><circle cx="40" cy="34.500" r="2.100" /></g>
      </g>
    ),
  },
  {
    name: "FaceTime",
    art: (
      <g>
        <rect x="1.500" y="5" width="42" height="37" rx="3" fill="url(#green)" />
        <rect x="8" y="14" width="21" height="18" rx="4" fill="#f2f5f3" />
        <path d="m30.500 21 7-6.500v17l-7-6.500z" fill="#f2f5f3" />
        <circle cx="37" cy="33.500" r="12" fill="#f1f4f2" />
        <path d="M30.500 28.500c1.500-2 2.500-2.500 3.800-.5 1 1.700 1.200 2.500-.3 3.800 1 2.500 2.700 4.200 5 5.200 1.300-1.500 2.200-1.300 3.800-.2 1.800 1.300 1.500 2.200-.4 3.700-4.900 3-13.900-6.500-11.900-12z" fill="#12cf52" />
      </g>
    ),
  },
  {
    name: "News",
    art: (
      <g>
        <circle cx="25" cy="25" r="23.500" fill="#fa1e46" />
        <circle cx="25" cy="25" r="20.800" fill="#f5f5f7" />
        <path d="M12 12h8l18 18v8h-8L12 20z" fill="#fa1e46" />
        <path d="M26 12h12v12.500zM12 25.500V38h12z" fill="#fa1e46" />
      </g>
    ),
  },
  {
    name: "iTunes",
    art: (
      <g>
        <circle cx="25" cy="25" r="23.500" fill="url(#ring)" />
        <circle cx="25" cy="25" r="21.500" fill="#f4f4f8" />
        <path d="M19 13.500 36 10v22.500c0 3-2.500 5-5.200 5-2.200 0-3.800-1.300-3.800-3.300 0-4 6-3.500 6-5.700V17l-11 2.500V36c0 3-2.500 5.500-5.200 5.500-2.300 0-3.800-1.500-3.800-3.500 0-4.200 6-3.800 6-6z" fill="url(#note)" />
      </g>
    ),
  },
  {
    name: "App Store",
    art: (
      <g>
        <circle cx="25" cy="25" r="23.500" fill="#e7edf4" />
        <circle cx="25" cy="25" r="21.800" fill="url(#store)" />
        <g fill="none" stroke="#fff" strokeWidth="3.600" strokeLinecap="round">
          <path d="M27.500 12 17 31M22.500 12l15 24.500M11 29.500h14M32 29.500h7M14 34.500l-1 2" />
        </g>
      </g>
    ),
  },
  {
    name: "System Preferences",
    art: (
      <g>
        <rect x="2" y="3" width="46" height="43.500" rx="1.500" fill="url(#pref)" />
        <circle cx="25" cy="25" r="19" fill="#2c2c2e" />
        {TEETH.map((a) => (
          <path key={a} d="M23.800 8h2.400v4h-2.400z" fill="#a5a7a8" transform={`rotate(${a} 25 25)`} />
        ))}
        <circle cx="25" cy="25" r="12.500" fill="#55575a" stroke="#a5a7a8" strokeWidth="3" />
        <path d="M25 25 13.500 18.500M25 25l11.500-6.500M25 25v13" stroke="#b4b6b7" strokeWidth="3" />
        <circle cx="25" cy="25" r="3" fill="#b4b6b7" />
        <circle cx="43.500" cy="8.500" r="10" fill="#f40d14" />
        <text x="43.500" y="12.500" textAnchor="middle" fontSize="11" fill="#fff" fontFamily="Inter, sans-serif">1</text>
      </g>
    ),
  },
];

const OFFICE: { name: string; running?: boolean; art: React.ReactNode }[] = [
  {
    name: "Word",
    running: true,
    art: (
      <g>
        <path d="M12 5h35.500v10.500H12z" fill="#1ba0f2" />
        <path d="M12 15.500h35.500v10H12z" fill="#1b79d8" />
        <path d="M12 25.500h35.500v10H12z" fill="#1a4fc0" />
        <path d="M12 35.500h35.500V45H12z" fill="#173593" />
        <OfficeTile letter="W" color="#1653bb" />
      </g>
    ),
  },
  {
    name: "PowerPoint",
    running: true,
    art: (
      <g>
        <circle cx="27.500" cy="25" r="20.500" fill="#ee6a3e" />
        <path d="M27.500 4.500A20.500 20.500 0 0 1 48 25H27.500z" fill="#ff8d66" />
        <path d="M7 25h41a20.500 20.500 0 0 1-41 0z" fill="#e2410f" />
        <OfficeTile letter="P" color="#c8290d" />
      </g>
    ),
  },
  {
    name: "Excel",
    running: true,
    art: (
      <g>
        <path d="M12 5h18v20H12z" fill="#14a366" />
        <path d="M30 5h18v10H30z" fill="#0bcb82" />
        <path d="M30 15h18v10H30z" fill="#14a35f" />
        <path d="M12 25h18v10H12z" fill="#0f6a3a" />
        <path d="M30 25h18v10H30z" fill="#0e8246" />
        <path d="M12 35h36v10H12z" fill="#07592f" />
        <OfficeTile letter="X" color="#0a753e" />
      </g>
    ),
  },
  {
    name: "Chrome",
    running: true,
    art: (
      <g>
        <circle cx="25" cy="25" r="24.500" fill="#fdcd2a" />
        <path d="M4 12.500 15 31l14 5-5 13.500A24.500 24.500 0 0 1 4 12.500z" fill="#1ba261" />
        <path d="M4 12.500C8 5 16 .5 25 .5s17.500 5 22 13.500H25c-6 0-11 4-12 10z" fill="#e8322c" />
        <circle cx="25" cy="25" r="11" fill="#fff" />
        <circle cx="25" cy="25" r="9" fill="#4781f1" />
      </g>
    ),
  },
];

const TRASH = {
  name: "Trash",
  art: (
    <g>
      <path d="M6 5c0-4 38-4 38 0l-5 40c-1 4.500-27 4.500-28 0z" fill="url(#trash)" />
      <path d="M16 9l3 36M34 9l-3 36" stroke="#f1f1f4" strokeWidth="4" opacity=".4" />
      <ellipse cx="25" cy="5" rx="18.500" ry="3" fill="#cfd0d4" stroke="#fafafa" strokeWidth="1.200" />
    </g>
  ),
};

function DockItem({ name, running, art }: { name: string; running?: boolean; art: React.ReactNode }) {
  return (
    <button aria-label={name} className="flex min-w-0 flex-1 flex-col items-center pt-2">
      <svg width="50" height="50" viewBox="0 0 50 50" className="isolate shrink-0 overflow-visible">{art}</svg>
      {running && <span className="mt-[5px] size-1 rounded-full bg-black" />}
    </button>
  );
}

function Dock() {
  return (
    <footer className="mx-12 mt-px flex h-[70px] shrink-0 rounded-t-[4px] bg-linear-to-r from-[#5b5a6d] via-[#545264] to-[#524f66] px-1">
      {APPS.map((a) => (
        <DockItem key={a.name} {...a} />
      ))}
      <div className="flex w-[27px] shrink-0 justify-center pt-[18px]"><div className="h-[34px] w-px bg-[#24243a]" /></div>
      {OFFICE.map((a) => (
        <DockItem key={a.name} {...a} />
      ))}
      <div className="flex w-[26px] shrink-0 justify-center pt-[9px]"><div className="h-[52px] w-px bg-[#24243a]" /></div>
      <DockItem {...TRASH} />
    </footer>
  );
}

export default function App() {
  return (
    <div className="flex h-screen flex-col overflow-hidden bg-linear-to-r from-[#161529] to-[#09080f] font-[Inter,sans-serif]">
      <Defs />
      <MenuBar />
      <div className="mt-px flex min-h-0 flex-1 flex-col">
        <TitleBar />
        <div className="flex shrink-0 flex-col bg-linear-to-b from-[#f6f6f6] to-[#ededed]">
          <RibbonTabs />
          <Ribbon />
        </div>
        <FormulaBar />
        <div className="h-px shrink-0 bg-[#f2f2f2]" />
        <Sheet />
        <SheetTabs />
        <StatusBar />
      </div>
      <Dock />
    </div>
  );
}
